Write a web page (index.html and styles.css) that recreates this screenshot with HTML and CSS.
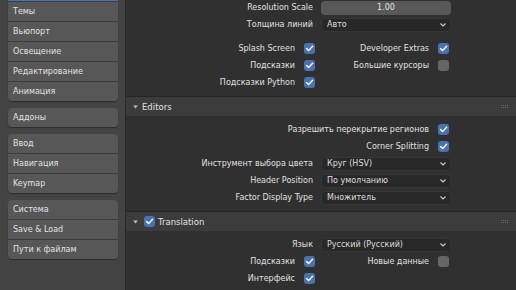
FILE: index.html
```html
<!DOCTYPE html>
<html lang="ru">
<head>
<meta charset="utf-8">
<title>Preferences</title>
<link rel="stylesheet" href="styles.css">
</head>
<body>
<div class="app">
  <nav class="sidebar">
    <div class="group first">
      <div class="item active">Интерфейс</div>
      <div class="item">Темы</div>
      <div class="item">Вьюпорт</div>
      <div class="item">Освещение</div>
      <div class="item">Редактирование</div>
      <div class="item">Анимация</div>
    </div>
    <div class="group">
      <div class="item">Аддоны</div>
    </div>
    <div class="group">
      <div class="item">Ввод</div>
      <div class="item">Навигация</div>
      <div class="item">Keymap</div>
    </div>
    <div class="group">
      <div class="item">Система</div>
      <div class="item">Save &amp; Load</div>
      <div class="item">Пути к файлам</div>
    </div>
  </nav>

  <main class="main">
    <section class="top">
      <div class="row prop">
        <div class="label">Resolution Scale</div>
        <div class="num">1.00</div>
      </div>
      <div class="row prop">
        <div class="label">Толщина линий</div>
        <div class="menu"><span>Авто</span><svg class="chev" viewBox="0 0 6 4"><polyline points="0.5,0.5 3,3 5.5,0.5"/></svg></div>
      </div>
      <div class="cbgroup">
        <div class="row">
          <div class="cell-a"><span>Splash Screen</span><span class="cb"><svg viewBox="0 0 11 11"><polyline points="2.5,5.5 4.6,7.6 8.6,3.2"/></svg></span></div>
          <div class="cell-b"><span>Developer Extras</span><span class="cb"><svg viewBox="0 0 11 11"><polyline points="2.5,5.5 4.6,7.6 8.6,3.2"/></svg></span></div>
        </div>
        <div class="row">
          <div class="cell-a"><span>Подсказки</span><span class="cb"><svg viewBox="0 0 11 11"><polyline points="2.5,5.5 4.6,7.6 8.6,3.2"/></svg></span></div>
          <div class="cell-b"><span>Большие курсоры</span><span class="cb off"></span></div>
        </div>
        <div class="row">
          <div class="cell-a"><span>Подсказки Python</span><span class="cb"><svg viewBox="0 0 11 11"><polyline points="2.5,5.5 4.6,7.6 8.6,3.2"/></svg></span></div>
        </div>
      </div>
    </section>

    <section class="panel">
      <header class="panel-head">
        <svg class="tri" viewBox="0 0 6 5"><polygon points="0,0.5 6,0.5 3,4.5"/></svg>
        <span class="title">Editors</span>
        <svg class="grip" viewBox="0 0 8 4"><rect x="0" y="0" width="1" height="1"/><rect x="2" y="0" width="1" height="1"/><rect x="4" y="0" width="1" height="1"/><rect x="6" y="0" width="1" height="1"/><rect x="0" y="2" width="1" height="1"/><rect x="2" y="2" width="1" height="1"/><rect x="4" y="2" width="1" height="1"/><rect x="6" y="2" width="1" height="1"/></svg>
      </header>
      <div class="panel-body">
        <div class="row">
          <div class="cell-full"><span>Разрешить перекрытие регионов</span><span class="cb"><svg viewBox="0 0 11 11"><polyline points="2.5,5.5 4.6,7.6 8.6,3.2"/></svg></span></div>
        </div>
        <div class="row">
          <div class="cell-full"><span>Corner Splitting</span><span class="cb"><svg viewBox="0 0 11 11"><polyline points="2.5,5.5 4.6,7.6 8.6,3.2"/></svg></span></div>
        </div>
        <div class="row prop">
          <div class="label">Инструмент выбора цвета</div>
          <div class="menu"><span>Круг (HSV)</span><svg class="chev" viewBox="0 0 6 4"><polyline points="0.5,0.5 3,3 5.5,0.5"/></svg></div>
        </div>
        <div class="row prop">
          <div class="label">Header Position</div>
          <div class="menu"><span>По умолчанию</span><svg class="chev" viewBox="0 0 6 4"><polyline points="0.5,0.5 3,3 5.5,0.5"/></svg></div>
        </div>
        <div class="row prop">
          <div class="label">Factor Display Type</div>
          <div class="menu"><span>Множитель</span><svg class="chev" viewBox="0 0 6 4"><polyline points="0.5,0.5 3,3 5.5,0.5"/></svg></div>
        </div>
      </div>
    </section>

    <section class="panel">
      <header class="panel-head">
        <svg class="tri" viewBox="0 0 6 5"><polygon points="0,0.5 6,0.5 3,4.5"/></svg>
        <span class="cb head-cb"><svg viewBox="0 0 11 11"><polyline points="2.5,5.5 4.6,7.6 8.6,3.2"/></svg></span>
        <span class="title head-title">Translation</span>
        <svg class="grip" viewBox="0 0 8 4"><rect x="0" y="0" width="1" height="1"/><rect x="2" y="0" width="1" height="1"/><rect x="4" y="0" width="1" height="1"/><rect x="6" y="0" width="1" height="1"/><rect x="0" y="2" width="1" height="1"/><rect x="2" y="2" width="1" height="1"/><rect x="4" y="2" width="1" height="1"/><rect x="6" y="2" width="1" height="1"/></svg>
      </header>
      <div class="panel-body">
        <div class="row prop">
          <div class="label">Язык</div>
          <div class="menu"><span>Русский (Русский)</span><svg class="chev" viewBox="0 0 6 4"><polyline points="0.5,0.5 3,3 5.5,0.5"/></svg></div>
        </div>
        <div class="row">
          <div class="cell-a"><span>Подсказки</span><span class="cb"><svg viewBox="0 0 11 11"><polyline points="2.5,5.5 4.6,7.6 8.6,3.2"/></svg></span></div>
          <div class="cell-b"><span>Новые данные</span><span class="cb off"></span></div>
        </div>
        <div class="row">
          <div class="cell-a"><span>Интерфейс</span><span class="cb"><svg viewBox="0 0 11 11"><polyline points="2.5,5.5 4.6,7.6 8.6,3.2"/></svg></span></div>
        </div>
      </div>
    </section>
  </main>
</div>
</body>
</html>
```

FILE: styles.css
```css
* { box-sizing: border-box; }

body {
  margin: 0;
  width: 516px;
  height: 290px;
  overflow: hidden;
  background: #303030;
  font-family: "DejaVu Sans", "Noto Sans", sans-serif;
  font-size: 8px;
  color: #e0e0e0;
}

.app {
  display: flex;
  height: 290px;
}

/* ---------- sidebar ---------- */
.sidebar {
  flex: none;
  width: 126px;
  padding: 0 7px 0 8px;
  background: #444444;
  border-right: 1px solid #282828;
}

.group {
  display: flex;
  flex-direction: column;
  gap: 1px;
  margin-top: 7px;
  border-radius: 4px;
  overflow: hidden;
  background: #3c3c3c;
  box-shadow: 0 1px 1px rgba(0, 0, 0, 0.35);
}

.group.first {
  margin-top: -18px;
}

.item {
  height: 19px;
  line-height: 19px;
  padding-left: 5px;
  background: #575757;
  color: #e2e2e2;
  white-space: nowrap;
}

.item.active {
  background: #4772b3;
  color: #ffffff;
}

/* ---------- main ---------- */
.main {
  flex: 1;
  background: #303030;
}

.top {
  margin-top: -1px;
  padding-bottom: 5px;
}

.cbgroup {
  margin-top: 7px;
}

.row {
  height: 17px;
  display: flex;
  align-items: center;
  white-space: nowrap;
}

.prop {
  display: grid;
  grid-template-columns: 195px 130px;
  align-items: center;
}

.label {
  text-align: right;
  padding-right: 8px;
}

.cell-a,
.cell-b,
.cell-full {
  display: flex;
  justify-content: flex-end;
  align-items: center;
  gap: 9px;
}

.cell-a {
  width: 190px;
  padding-right: 1px;
}

.cell-b {
  width: 133px;
}

.cell-full {
  width: 323px;
}

.num {
  height: 14px;
  line-height: 14px;
  border-radius: 4px;
  background: #585858;
  text-align: center;
  color: #e6e6e6;
}

.menu {
  height: 14px;
  border-radius: 4px;
  background: #282828;
  border: 1px solid #363636;
  padding: 0 4px 0 5px;
  display: flex;
  align-items: center;
  justify-content: space-between;
  color: #dedede;
}

.chev {
  width: 6px;
  height: 4px;
  fill: none;
  stroke: #cccccc;
  stroke-width: 1.1;
}

/* ---------- checkbox ---------- */
.cb {
  flex: none;
  width: 11px;
  height: 11px;
  border-radius: 3px;
  background: #4772b3;
  display: inline-flex;
}

.cb svg {
  width: 11px;
  height: 11px;
  fill: none;
  stroke: #ffffff;
  stroke-width: 1.4;
  stroke-linecap: round;
  stroke-linejoin: round;
}

.cb.off {
  background: #666666;
}

/* ---------- panels ---------- */
.panel-head {
  height: 20px;
  border-top: 1px solid #262626;
  background: #3c3c3c;
  display: flex;
  align-items: center;
  padding: 0 7px;
}

.panel-body {
  padding: 5px 0 5px;
}

.tri {
  width: 5px;
  height: 4px;
  fill: #bdbdbd;
  flex: none;
}

.title {
  font-size: 8.5px;
  margin-left: 4px;
  color: #e2e2e2;
}

.head-cb {
  margin-left: 6px;
}

.head-title {
  margin-left: 3px;
}

.grip {
  margin-left: auto;
  width: 8px;
  height: 4px;
  fill: #6a6a6a;
}
```
